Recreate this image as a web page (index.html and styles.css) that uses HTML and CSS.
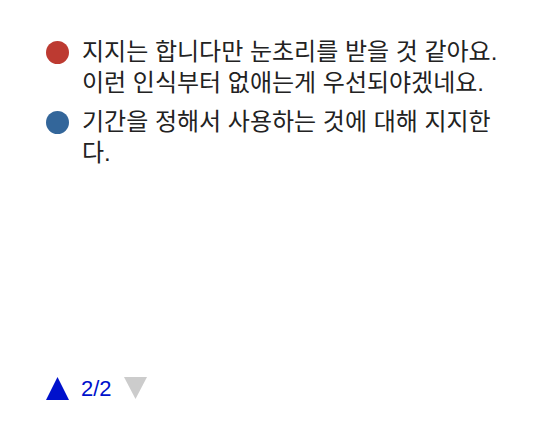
FILE: index.html
```html
<!DOCTYPE html>
<html>
<head>
<meta charset="utf-8">
<link rel="stylesheet" href="styles.css">
</head>
<body>
<div class="legend">
  <div class="item">
    <span class="dot red"></span>
    <span class="label">지지는 합니다만 눈초리를 받을 것 같아요.<br>이런 인식부터 없애는게 우선되야겠네요.</span>
  </div>
  <div class="item">
    <span class="dot blue"></span>
    <span class="label">기간을 정해서 사용하는 것에 대해 지지한<br>다.</span>
  </div>
</div>
<div class="pager">
  <svg class="arrow" width="23" height="23" viewBox="0 0 23 23"><polygon points="11.5,0 23,23 0,23" fill="#0011cc"/></svg>
  <span class="count">2/2</span>
  <svg class="arrow" width="23" height="23" viewBox="0 0 23 23"><polygon points="0,0 23,0 11.5,22" fill="#cccccc"/></svg>
</div>
</body>
</html>
```

FILE: styles.css
```css
html, body {
  margin: 0;
  padding: 0;
  background: #ffffff;
}
body {
  width: 538px;
  height: 432px;
  font-family: Arial, "Liberation Sans", "Noto Sans CJK KR", sans-serif;
  font-size: 24px;
  color: #222222;
  position: relative;
}
.legend {
  padding: 36px 0 0 46px;
  display: flex;
  flex-direction: column;
  gap: 8px;
}
.item {
  display: flex;
  align-items: flex-start;
}
.dot {
  flex: none;
  width: 23px;
  height: 23px;
  border-radius: 50%;
  margin-top: 5px;
  margin-right: 13px;
}
.red { background: #bd3a31; }
.blue { background: #33669a; }
.label {
  line-height: 31px;
}
.pager {
  position: absolute;
  left: 46px;
  top: 377px;
  display: flex;
  align-items: center;
  height: 23px;
}
.count {
  color: #0011cc;
  font-size: 22px;
  margin: 0 12px 0 12px;
  line-height: 23px;
}
.arrow { display: block; }
```
